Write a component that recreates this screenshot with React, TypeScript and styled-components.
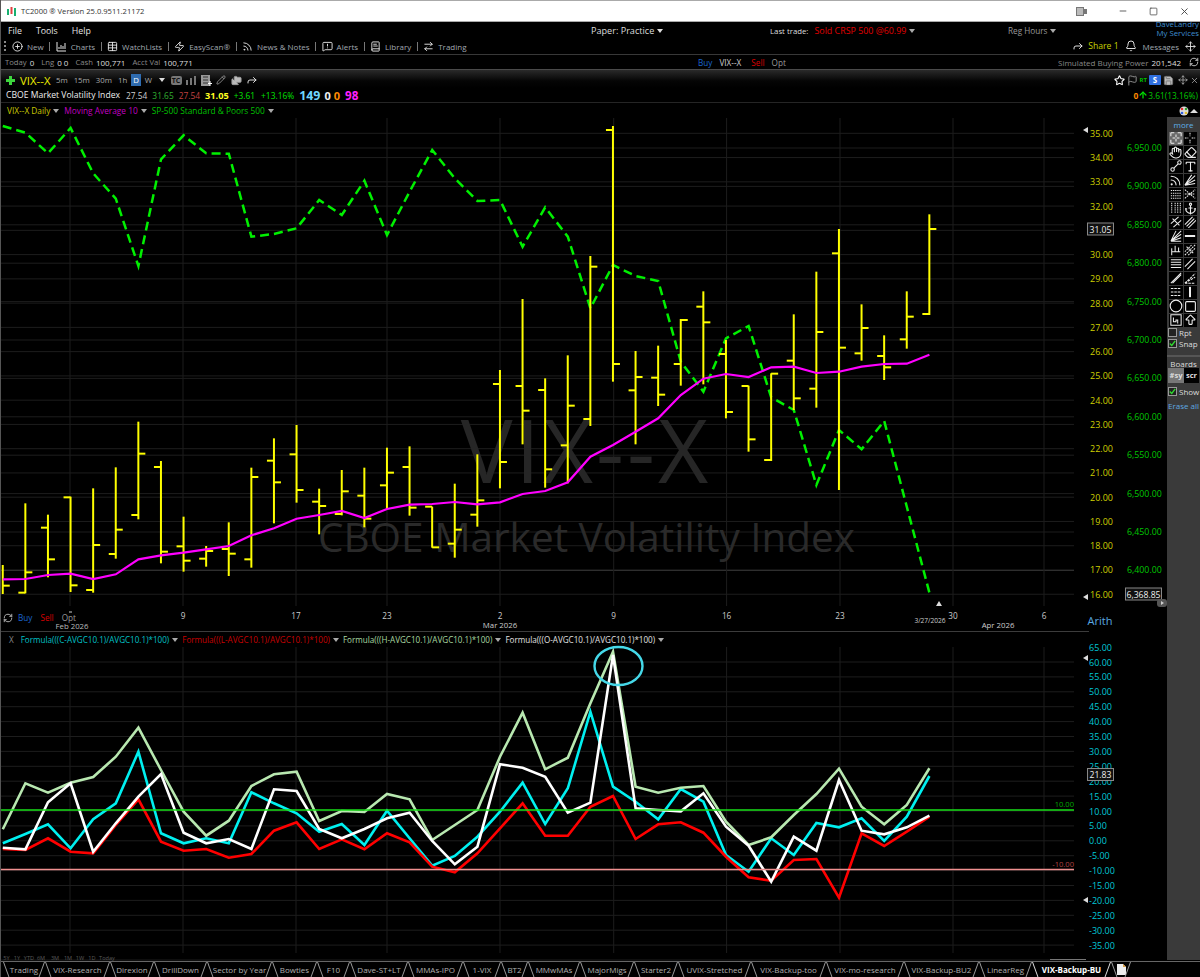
import React from "react";
import styled, { createGlobalStyle } from "styled-components";
import { CirclePlus, Table, Rss, MessageSquareWarning, BookText, ArrowRightLeft, Zap, Forward, Bell, Move, Star, Flag, Save, RefreshCw, Pencil, Folders, Minus, Square, X, Hand, Eraser, Type, Anchor, Circle, ArrowBigUp, ArrowUp } from "lucide-react";

const FONT = '"Open Sans", "Noto Sans", sans-serif';

const GlobalStyle = createGlobalStyle`
  html, body { margin: 0; padding: 0; background: #000; }
  #root { width: 1200px; height: 977px; overflow: hidden; }
  * { box-sizing: border-box; }
`;

const Page = styled.div`
  width: 1200px; height: 977px; display: flex; flex-direction: column; background: #000;
  font-family: ${FONT}; font-size: 9px; color: #ddd; overflow: hidden; border-left: 1px solid #555;
  white-space: nowrap;
`;
const TitleBar = styled.header`
  height: 22px; margin-left: -1px; background: #fff; border-top: 1px solid #aaa; border-bottom: 1px solid #aaa;
  display: flex; align-items: center; padding-left: 6px; color: #333; font-size: 7.6px;
`;
const TitleText = styled.span`margin-left: 4px;`;
const WindowButtons = styled.div`
  margin-left: auto; display: flex; align-items: center; color: #444;
`;
const WinBtn = styled.span<{ $w: number }>`
  width: ${p => p.$w}px; display: flex; justify-content: center;
`;
const MenuRow = styled.nav`
  height: 18px; padding-bottom: 1px; display: grid; grid-template-columns: 590px 179px 238px 148px 44px; align-items: center; color: #e4e4e4;
`;
const MenuLeft = styled.div`display: flex; gap: 14px; padding-left: 7px; font-size: 8.8px;`;
const Caret = styled.i<{ $c?: string }>`
  display: inline-block; width: 0; height: 0; margin-left: 3px; vertical-align: 1px;
  border-left: 3px solid transparent; border-right: 3px solid transparent; border-top: 4px solid ${p => p.$c || "#aaa"};
`;
const PaperLabel = styled.span`font-size: 9.1px; color: #ddd;`;
const LastTrade = styled.span`font-size: 7.8px; color: #ddd;`;
const Red = styled.span`color: #e00000; font-size: 8.9px; margin-left: 6px;`;
const RegHours = styled.span`font-size: 8.2px; color: #999;`;
const UserBlock = styled.div`
  display: flex; flex-direction: column; align-items: flex-end; color: #3f8fd0; font-size: 7.8px; line-height: 9px; margin-top: -4px; padding-right: 1px;
`;
const Toolbar = styled.div`
  height: 15px; padding-bottom: 2px; display: flex; align-items: center; padding-left: 3px; border-bottom: 1px solid #383838; color: #a0a8b0; font-size: 8px;
`;
const Grip = styled.span`
  width: 2px; height: 11px; margin-right: 6px;
  background: repeating-linear-gradient(#888 0 2px, transparent 2px 4px);
`;
const ToolItem = styled.span`display: inline-flex; align-items: center; gap: 4px; svg { color: #e8e8e8; flex: none; }`;
const Divider = styled.span`width: 1px; height: 9px; background: #777; margin: 0 5.5px;`;
const ToolRight = styled.div`margin-left: auto; display: flex; align-items: center; gap: 6px; padding-right: 4px; svg { color: #ddd; }`;
const ShareText = styled.span`color: #c8d400; margin-left: -2px; font-size: 8.6px;`;
const StatsRow = styled.div`
  height: 15px; display: grid; grid-template-columns: 697px 360px 1fr; align-items: center; border-bottom: 1px solid #4a4a4a; font-size: 7.7px; color: #888;
`;
const StatGroup = styled.div`display: flex; align-items: center; gap: 3px; padding-left: 4px;`;
const StatValue = styled.b`font-weight: 400; font-size: 8px; color: #ddd; margin-right: 4px;`;
const TradeGroup = styled.div`display: flex; gap: 7px; font-size: 8.2px;`;
const Buy = styled.span`color: #1a66d0;`;
const Sell = styled.span`color: #d80000;`;
const Opt = styled.span`color: #999;`;
const SymbolPlain = styled.span`color: #ccc; margin-right: 3px;`;
const PowerGroup = styled.div`display: flex; align-items: center; gap: 3px; font-size: 8px; svg { color: #ddd; margin-left: 1px; }`;
const SymbolHeader = styled.section`
  height: 33px; display: flex; flex-direction: column; border-bottom: 1px solid #252525;
  background: linear-gradient(#2a2a2a 0, #050505 11px, #000 18px);
`;
const SymbolTop = styled.div`height: 18px; display: flex; align-items: center; padding-left: 5px; color: #aaa; font-size: 7.8px; padding-top: 2px;`;
const PlusIcon = styled.span`
  width: 9px; height: 9px; margin-right: 5px;
  background: linear-gradient(#3dd63d,#3dd63d) center/3px 9px no-repeat, linear-gradient(#3dd63d,#3dd63d) center/9px 3px no-repeat;
`;
const SymbolName = styled.span`color: #ecec00; font-size: 11.4px; margin-right: 3px;`;
const Period = styled.span<{ $on?: boolean }>`
  display: inline-flex; justify-content: center; padding: 0 2.5px; margin-right: 1px; height: 12px; line-height: 12px;
  background: ${p => (p.$on ? "#2f6cb0" : "transparent")}; color: ${p => (p.$on ? "#fff" : "#aaa")};
`;
const IconRow = styled.span`display: inline-flex; align-items: center; gap: 4.5px; margin-left: 6px; svg { color: #999; flex: none; }`;
const TcChip = styled.span`
  background: #777; color: #111; font-size: 7px; font-weight: 700; width: 11px; height: 9px; line-height: 9px; text-align: center; border-radius: 2px; 
`;
const RightIcons = styled.span`margin-left: auto; display: flex; align-items: center; gap: 2px; padding-right: 1px; color: #aaa; svg { flex: none; }`;
const RtTag = styled.span`color: #00c000; font-size: 6px; font-weight: 700;`;
const SChip = styled.span`background: #2f6fe0; color: #fff; font-size: 8px; font-weight: 700; width: 12px; height: 10px; line-height: 10px; text-align: center; border-radius: 1px;`;
const SaveWrap = styled.span`display: flex; margin-right: 2px;`;
const SymbolBottom = styled.div`height: 14px; display: flex; align-items: center; padding-left: 5px; font-size: 8.6px; color: #eee;`;
const Quote = styled.span<{ $c: string; $s?: number; $b?: boolean; $ml?: number }>`
  color: ${p => p.$c}; font-size: ${p => p.$s || 8.4}px; font-weight: ${p => (p.$b ? 700 : 400)}; margin-left: ${p => p.$ml ?? 5}px;
`;
const QuoteRight = styled.span`margin-left: auto; display: flex; align-items: center; padding-right: 2px; font-size: 8.4px; color: #00c800;`;
const LegendRow = styled.div`height: 15px; display: flex; align-items: center; padding-left: 6px; font-size: 8.3px;`;
const LegendItem = styled.span<{ $c: string }>`color: ${p => p.$c}; margin-right: 5px;`;
const LegendTools = styled.span`margin-left: auto; display: flex; align-items: center; gap: 1px; padding-right: 2px;`;
const UpCaret = styled.i`
  width: 0; height: 0; border-left: 4px solid transparent; border-right: 4px solid transparent; border-bottom: 4px solid #ddd;
`;
const Workspace = styled.main`height: 843px; display: flex;`;
const ChartColumn = styled.div`width: 1166px; display: flex; flex-direction: column;`;
const ChartPane = styled.div`position: relative; height: 513px;`;
const ChartSvg = styled.svg`display: block; font-family: ${FONT}; overflow: visible;`;
const TradeOverlay = styled.div`
  position: absolute; left: 2px; top: 494px; display: flex; align-items: center; gap: 8px; font-size: 8.2px;
  svg { color: #ccc; margin-right: -3px; }
`;
const OscLegend = styled.div`
  height: 16px; border-top: 1px solid #3c3c3c; display: flex; align-items: center; padding-left: 8px; font-size: 8.1px; margin-right: 78px;
`;
const OscClose = styled.span`color: #888; margin-right: 7px;`;
const OscItem = styled.span<{ $c: string }>`color: ${p => p.$c}; margin-right: 4px;`;
const ToolStrip = styled.aside`
  width: 33px; height: 843px; margin-top: -1px; background: #3a3a3a; display: flex; flex-direction: column; align-items: center; color: #ddd; font-size: 8px;
`;
const More = styled.span`color: #5fb0e8; font-size: 8px; height: 14px; line-height: 15px;`;
const ToolGrid = styled.div`display: grid; grid-template-columns: 15px 14px; grid-auto-rows: 14px; margin-left: -2px;`;
const ToolCell = styled.span<{ $on?: boolean }>`
  display: flex; align-items: center; justify-content: center; margin: .5px; background: ${p => (p.$on ? "#6a6a6a" : "#000")}; color: #eee;
`;
const CheckRow = styled.label`display: flex; align-items: center; gap: 2px; width: 100%; padding-left: 1px; height: 11px; font-size: 8px; color: #ddd;`;
const CheckBox = styled.span<{ $on?: boolean }>`
  width: 9px; height: 9px; border: 1px solid #999; background: #222; display: flex; align-items: center; justify-content: center; color: #30e030; flex: none;
`;
const StripRule = styled.div`width: 100%; height: 2px; background: #555; margin: 6px 0 1px;`;
const Boards = styled.span`color: #ddd; font-size: 8px; height: 11px; line-height: 11px;`;
const BoardButtons = styled.div`display: grid; grid-template-columns: 16px 15px; height: 15px; width: 31px; font-size: 7.6px; font-weight: 700; text-align: center; line-height: 15px; margin-bottom: 3px; margin-top: -1px;`;
const BoardOn = styled.span`background: #777; color: #ddd;`;
const BoardOff = styled.span`background: #000; color: #ddd;`;
const EraseAll = styled.span`color: #5fa8e0; font-size: 8px; margin-top: 3px;`;
const TabBar = styled.footer`
  height: 16px; margin-left: -1px; display: flex; padding-left: 3px; border-top: 1px solid #666; background: #000;
`;
const Tab = styled.span<{ $w: number; $on?: boolean }>`
  position: relative; width: ${p => p.$w}px; flex: none; height: 15px; display: flex; align-items: center; justify-content: center;
  color: ${p => (p.$on ? "#fff" : "#b0b0b0")}; font-weight: ${p => (p.$on ? 700 : 400)}; font-size: 8px;
  &::before, &::after { content: ""; position: absolute; top: 0; bottom: 0; width: 1px; background: ${p => (p.$on ? "#ddd" : "#999")}; }
  &::before { left: 0; transform-origin: top left; transform: skewX(20deg); }
  &::after { right: 0; transform-origin: top right; transform: skewX(-20deg); }
`;

const xAt = (i: number) => 2.75 + 22.6 * i;
const pts = (a: number[], off: number) => a.map((z, i) => `${xAt(i).toFixed(1)},${(off + z / 3).toFixed(1)}`).join(" ");

const bars: [number, number, number, number][] = [
  [1335,1440,1440,1397],[1150,1420,1418,1357],[1184,1372,1223,1318],[1130,1416,1132,1396],[1105,1418,1410,1275],[1042,1316,1302,1229],
  [905,1198,1185,1001],[1023,1330,1041,1295],[1190,1355,1279,1322],[1278,1340,1316,1293],[1207,1368,1287,1301],[1043,1343,1318,1071],
  [955,1210,1022,1087],[915,1148,1003,1110],[1106,1243,1145,1158],[1050,1186,1182,1114],[1043,1222,1127,1196],[983,1167,1096,1058],
  [979,1187,1041,1163],[1160,1283,1160,1282],[1091,1313,1271,1229],[1003,1220,1184,1141],[750,1105,792,1026],[537,973,798,872],
  [775,1103,810,1048],[706,1090,976,857],[408,918,897,440],[18,785,30,732],[693,973,811,771],[677,858,773,824],[597,797,732,600],
  [514,793,560,607],[660,895,702,876],[797,995,798,958],[760,1023,1020,761],[583,870,722,835],[455,863,806,636],[327,1110,400,683],
  [553,722,700,624],[646,780,708,742],[514,686,658,590],[283,585,582,327],
];
const ma = [1378,1377,1365,1361,1377,1363,1318,1306,1298,1288,1278,1246,1225,1196,1185,1173,1194,1167,1154,1152,1146,1153,1147,1122,1113,1087,1010,975,935,895,825,776,762,771,742,740,759,755,740,732,731,704];
const sp = [18,38,100,24,160,236,438,118,46,100,101,350,342,325,240,285,182,345,215,90,175,243,240,380,262,350,565,435,468,483,725,815,655,618,832,870,1095,930,988,903,1160,1418];
const oscH = [568,430,458,428,411,350,263,390,515,587,542,438,403,395,543,513,516,462,478,600,555,510,350,218,388,353,190,35,440,458,443,438,545,615,592,525,462,386,500,553,495,385];
const oscC = [610,582,553,625,538,490,335,580,610,595,610,457,490,520,575,552,615,512,595,677,648,590,515,428,552,445,215,440,485,538,447,485,645,695,595,645,549,562,535,603,530,408];
const oscL = [627,630,595,635,640,555,478,605,632,627,653,642,572,547,627,598,628,580,607,680,697,640,565,490,587,587,500,468,597,553,547,578,650,712,722,660,657,773,580,618,575,530];
const oscO = [623,628,487,430,635,550,470,402,578,610,597,627,448,453,567,595,567,535,518,603,673,620,373,383,410,518,488,45,505,510,514,460,560,617,725,590,632,420,572,583,562,527];

const vGrid = [70, 183, 296, 387, 500, 613.7, 726.6, 840, 953, 1044];
const priceY = (p: number) => 133.3 + (35 - p) * 24.26;
const spY = (i: number) => 148 + i * 38.4;
const oscY = (v: number) => 840.8 - v * 2.98;
const GRID = "#1d1d1d";
const YEL = "#cfcf00";
const GRN = "#00c800";
const CY = "#00c8d8";

const Tri = ({ x, y }: { x: number; y: number }) => <polygon points={`${x},${y} ${x + 5},${y - 3} ${x + 5},${y + 3}`} fill="#ddd" />;

const ValueBox = ({ x, y, w, t }: { x: number; y: number; w: number; t: string }) => (
  <g>
    <rect x={x} y={y - 6} width={w} height={12} fill="#111" stroke="#888" />
    <text x={x + w / 2} y={y + 0.5} fill="#eee" fontSize="8.6" textAnchor="middle" dominantBaseline="central">{t}</text>
  </g>
);

const PriceChart = () => (
  <ChartSvg width={1166} height={513} viewBox="1 118 1166 513">
    {Array.from({ length: 20 }, (_, i) => <line key={i} x1={1} x2={1074} y1={priceY(35 - i)} y2={priceY(35 - i)} stroke={GRID} />)}
    {Array.from({ length: 12 }, (_, i) => <line key={i} x1={1} x2={1074} y1={spY(i)} y2={spY(i)} stroke={i === 11 ? "#333" : GRID} />)}
    {vGrid.map(x => <line key={x} x1={x} x2={x} y1={118} y2={606} stroke={GRID} />)}
    <text x={586} y={483} fill="#262626" fontSize="87" letterSpacing="3" textAnchor="middle">VIX--X</text>
    <text x={586.500} y={552} fill="#2a2a2a" fontSize="40.500" textAnchor="middle">CBOE Market Volatility Index</text>
    <polyline points={pts(sp, 120)} fill="none" stroke="#00f000" strokeWidth="2.5" strokeDasharray="9 5" />
    {bars.map(([t, b, o, c], i) => {
      const x = xAt(i);
      return (
        <g key={i} stroke="#ffff00" strokeWidth="2">
          <line x1={x} x2={x} y1={120 + t / 3} y2={Math.min(120 + b / 3, 594)} />
          {o < 1430 && <line x1={x - 7} x2={x} y1={120 + o / 3} y2={120 + o / 3} />}
          <line x1={x} x2={x + 7} y1={120 + c / 3} y2={120 + c / 3} />
        </g>
      );
    })}
    <polyline points={pts(ma, 120)} fill="none" stroke="#ff00ff" strokeWidth="2.2" />
    {Array.from({ length: 20 }, (_, i) => 35 - i).filter(v => v !== 31).map(v => <text key={v} x={1090} y={priceY(v)} fill={YEL} fontSize="9" dominantBaseline="central">{v.toFixed(2)}</text>)}
    {Array.from({ length: 12 }, (_, i) => <text key={i} x={1127} y={spY(i)} fill={GRN} fontSize="8.800" dominantBaseline="central">{(6950 - i * 50).toLocaleString("en-US")}.00</text>)}
    <Tri x={1083} y={130} />
    <Tri x={1083} y={597} />
    <ValueBox x={1087.5} y={229} w={26} t="31.05" />
    <ValueBox x={1125.5} y={594} w={36} t="6,368.85" />
    <rect x={1157} y={599} width={10} height={8} rx={3} fill="#555" />
    <polygon points="1161,601 1164,603 1161,605" fill="#ccc" />
    <polygon points="936,606 942,606 939,601" fill="#ddd" />
    <line x1={69} x2={72} y1={612} y2={612} stroke="#ccc" />
    {[["9", 183], ["17", 296], ["23", 387], ["2", 500], ["9", 613.7], ["16", 726.6], ["23", 840], ["30", 953], ["6", 1044]].map(([t, x]) => (
      <text key={`${t}${x}`} x={x} y={615} fill="#ccc" fontSize="8.2" textAnchor="middle" dominantBaseline="central">{t}</text>
    ))}
    <text x={72} y={626} fill="#bbb" fontSize="7.800" textAnchor="middle" dominantBaseline="central">Feb 2026</text>
    <text x={500} y={625} fill="#ccc" fontSize="7.800" textAnchor="middle" dominantBaseline="central">Mar 2026</text>
    <text x={998} y={625} fill="#ccc" fontSize="7.800" textAnchor="middle" dominantBaseline="central">Apr 2026</text>
    <text x={930} y={620} fill="#ccc" fontSize="6.6" textAnchor="middle" dominantBaseline="central">3/27/2026</text>
    <text x={1100} y={620} fill="#5aa8e0" fontSize="11" textAnchor="middle" dominantBaseline="central">Arith</text>
  </ChartSvg>
);

const OscChart = () => (
  <ChartSvg width={1166} height={314} viewBox="1 647 1166 314">
    {Array.from({ length: 21 }, (_, i) => <line key={i} x1={1} x2={1074} y1={oscY(60 - i * 5)} y2={oscY(60 - i * 5)} stroke={GRID} />)}
    {vGrid.map(x => <line key={x} x1={x} x2={x} y1={647} y2={953} stroke={GRID} />)}
    <polyline points={pts(oscC, 640)} fill="none" stroke="#00f0f0" strokeWidth="2.6" />
    <polyline points={pts(oscL, 640)} fill="none" stroke="#ff0000" strokeWidth="2.6" />
    <polyline points={pts(oscH, 640)} fill="none" stroke="#b8e8b0" strokeWidth="2.6" />
    <polyline points={pts(oscO, 640)} fill="none" stroke="#ffffff" strokeWidth="2.6" />
    <line x1={1} x2={1074} y1={810} y2={810} stroke="#18e018" strokeWidth="1.4" />
    <line x1={1} x2={1074} y1={869.5} y2={869.5} stroke="#f09090" strokeWidth="1.4" />
    <text x={1074} y={804} fill="#00a800" fontSize="7.6" textAnchor="end" dominantBaseline="central">10.00</text>
    <text x={1074} y={864} fill="#b04040" fontSize="7.6" textAnchor="end" dominantBaseline="central">-10.00</text>
    <ellipse cx={618.5} cy={666} rx={24} ry={19} fill="none" stroke="#45d8e8" strokeWidth="2.4" />
    {Array.from({ length: 21 }, (_, i) => (
      <text key={i} x={1089} y={oscY(65 - i * 5)} fill={CY} fontSize="9" dominantBaseline="central">{(65 - i * 5).toFixed(2)}</text>
    ))}
    <ValueBox x={1087.5} y={774.5} w={26} t="21.83" />
    <Tri x={1083} y={658} />
    <Tri x={1083} y={900} />
    {[["5Y", 6.5], ["1Y", 17], ["YTD", 29], ["6M", 41], ["3M", 55], ["1M", 68], ["1W", 80], ["1D", 92], ["Today", 107]].map(([t, x]) => (
      <text key={t} x={x} y={958} fill="#5a5a5a" fontSize="5.6" textAnchor="middle" dominantBaseline="central">{t}</text>
    ))}
    <line x1={1050} x2={1086} y1={959.5} y2={959.5} stroke="#777" />
  </ChartSvg>
);

const S = ({ children }: { children: React.ReactNode }) => (
  <svg width="12" height="12" viewBox="0 0 14 14" fill="none" stroke="currentColor" strokeWidth="1.2">{children}</svg>
);
const tools: React.ReactNode[] = [
  <S><path d="M1 1h4M9 1h4M1 13h4M9 13h4M1 1v4M13 1v4M1 9v4M13 9v4M7 3v3M7 8v3M3 7h3M8 7h3" /></S>,
  <S><path d="M7 1v4M7 9v4M1 7h4M9 7h4" strokeDasharray="2 1" /></S>,
  <Hand size={13} />, <Eraser size={13} />,
  <S><circle cx="3" cy="11" r="2" /><circle cx="11" cy="3" r="2" /><path d="M4.5 9.5l5-5" /></S>,
  <Type size={13} />,
  <Rss size={13} />,
  <S><path d="M1 13L13 2M1 13l12-6M1 13l12-2M1 13L9 1" /></S>,
  <S><path d="M1 3h12M1 6h12M1 9h12M1 12h12" strokeDasharray="1.5 1" /></S>,
  <S><path d="M1 2l12 10M1 12L13 2M1 7h12" strokeDasharray="2 1" /></S>,
  <S><path d="M2 1v12M6 1v12M9 1v12M12 1v12" strokeDasharray="1.5 1" /></S>,
  <Anchor size={13} />,
  <S><path d="M1 9L10 1M4 13L13 5M3 3l8 8" /></S>,
  <S><path d="M1 10L10 1M3 12L12 3M5 14L14 5" /></S>,
  <S><path d="M1 13L13 1M1 13L13 5M1 13L13 9M1 13L7 1M1 13h12" /></S>,
  <S><path d="M1 7h12" strokeWidth="2.4" /></S>,
  <S><path d="M2 13V5M2 9h10M6 9V2M10 9V4" /></S>,
  <S><path d="M1 13L13 1M1 9L9 1M5 13L13 5M3 3l8 8" strokeDasharray="2 1" /></S>,
  <S><path d="M1 2h12M1 5h12M1 8h12M1 11h12" /></S>,
  <S><path d="M1 10L10 1M4 13L13 4" /></S>,
  <S><path d="M1 13L13 1M3 13L13 3" /></S>,
  <S><path d="M1 13L13 2M1 13L13 6M1 13h12" strokeDasharray="3 1" /></S>,
  <S><path d="M1 3h12M1 7h12M1 11h12" strokeDasharray="3 1" /></S>,
  <S><path d="M7 1v12" strokeWidth="2.4" /></S>,
  <Circle size={14} />,
  <Square size={13} />,
  <S><path d="M1 1h12v12H1zM4 4v5h3V7h2v4" /></S>,
  <ArrowBigUp size={14} />,
];

const Check = () => (
  <svg width="9" height="9" viewBox="0 0 9 9" fill="none" stroke="currentColor" strokeWidth="1.6"><path d="M1 4.5L3.5 7 8 1" /></svg>
);

const tabs: [string, number][] = [
  ["Trading", 42], ["VIX-Research", 65], ["Direxion", 44], ["DrillDown", 53], ["Sector by Year", 65], ["Bowties", 45], ["F10", 33], ["Dave-ST+LT", 58],
  ["MMAs-IPO", 55], ["1-VIX", 38], ["BT2", 27], ["MMwMAs", 52], ["MajorMigs", 54], ["Starter2", 44], ["UVIX-Stretched", 73], ["VIX-Backup-too", 75],
  ["VIX-mo-research", 78], ["VIX-Backup-BU2", 75], ["LinearReg", 53], ["VIX-Backup-BU", 79],
];

export default function App() {
  return (
    <Page>
      <GlobalStyle />
      <TitleBar>
        <svg width="11" height="11" viewBox="0 0 11 11">
          <path d="M1 3h2v6H1z" fill="#18b070" /><path d="M4.5 1h2v7h-2z" fill="#e04040" /><path d="M8 2h2v8H8z" fill="#18b070" />
        </svg>
        <TitleText>TC2000 ® Version 25.0.9511.21172</TitleText>
        <WindowButtons>
          <WinBtn $w={50}>
            <svg width="12" height="9" viewBox="0 0 12 9"><rect x=".5" y=".5" width="7" height="8" fill="#bbb" stroke="#777" /><rect x="7" y="2" width="4" height="5" fill="#777" /></svg>
          </WinBtn>
          <WinBtn $w={31}><Minus size={10} /></WinBtn>
          <WinBtn $w={31}><Square size={9} /></WinBtn>
          <WinBtn $w={31}><X size={11} /></WinBtn>
        </WindowButtons>
      </TitleBar>
      <MenuRow>
        <MenuLeft><span>File</span><span>Tools</span><span>Help</span></MenuLeft>
        <PaperLabel>Paper: Practice<Caret $c="#ddd" /></PaperLabel>
        <LastTrade>Last trade:<Red>Sold CRSP 500 @60.99</Red><Caret /></LastTrade>
        <RegHours>Reg Hours<Caret /></RegHours>
        <UserBlock><span>DaveLandry</span><span>My Services</span></UserBlock>
      </MenuRow>
      <Toolbar>
        <Grip />
        <ToolItem><CirclePlus size={11} />New</ToolItem><Divider />
        <ToolItem><svg width="11" height="11" viewBox="0 0 11 11" fill="none" stroke="currentColor"><path d="M1 1v9h9M3 8V6M5 8V4M7 8V5M9 8V2" /></svg>Charts</ToolItem><Divider />
        <ToolItem><Table size={11} />WatchLists</ToolItem><Divider />
        <ToolItem><Zap size={11} />EasyScan®</ToolItem><Divider />
        <ToolItem><Rss size={11} />News &amp; Notes</ToolItem><Divider />
        <ToolItem><MessageSquareWarning size={11} />Alerts</ToolItem><Divider />
        <ToolItem><BookText size={11} />Library</ToolItem><Divider />
        <ToolItem><ArrowRightLeft size={11} />Trading</ToolItem>
        <ToolRight>
          <Forward size={12} />
          <ShareText>Share 1</ShareText>
          <Bell size={12} />
          <span>Messages</span>
          <Move size={11} />
        </ToolRight>
      </Toolbar>
      <StatsRow>
        <StatGroup>
          <span>Today</span><StatValue>0</StatValue><span>Lng</span><StatValue>0 0</StatValue><span>Cash</span><StatValue>100,771</StatValue><span>Acct Val</span><StatValue>100,771</StatValue>
        </StatGroup>
        <TradeGroup><Buy>Buy</Buy><SymbolPlain>VIX--X</SymbolPlain><Sell>Sell</Sell><Opt>Opt</Opt></TradeGroup>
        <PowerGroup><span>Simulated Buying Power</span><StatValue>201,542</StatValue><RefreshCw size={10} /></PowerGroup>
      </StatsRow>
      <SymbolHeader>
        <SymbolTop>
          <PlusIcon />
          <SymbolName>VIX--X</SymbolName>
          <Period>5m</Period><Period>15m</Period><Period>30m</Period><Period>1h</Period><Period $on>D</Period><Period>W</Period>
          <Caret $c="#ddd" />
          <IconRow>
            <TcChip>TC</TcChip>
            <svg width="10" height="9" viewBox="0 0 10 9" fill="#777"><path d="M0 4h2v5H0zM4 2h2v7H4zM8 0h2v9H8z" /></svg>
            <svg width="11" height="11" viewBox="0 0 11 11" fill="#999"><path d="M0 0h9v11H0z" /><path d="M2 2h5M2 5h5M2 8h5" stroke="#333" strokeWidth="1" /><path d="M9 6v5M7 8.500h4" stroke="#fff" /></svg>
            <Pencil size={10} />
            <Folders size={11} fill="#bbb" />
            <Forward size={12} color="#ddd" />
          </IconRow>
          <RightIcons>
            <Star size={11} color="#fff" strokeWidth={2.4} />
            <Flag size={11} color="#999" />
            <RtTag>RT</RtTag>
            <SChip>S</SChip>
            <SaveWrap><Save size={11} fill="#bbb" color="#777" /></SaveWrap>
            <Move size={10} />
            <X size={9} />
          </RightIcons>
        </SymbolTop>
        <SymbolBottom>
          <span>CBOE Market Volatility Index</span>
          <Quote $c="#ccc" $ml={6}>27.54</Quote>
          <Quote $c="#30b030">31.65</Quote>
          <Quote $c="#c04040">27.54</Quote>
          <Quote $c="#ffff20" $b $s={9.2}>31.05</Quote>
          <Quote $c="#00e000">+3.61</Quote>
          <Quote $c="#00e000" $ml={6}>+13.16%</Quote>
          <Quote $c="#70d8ff" $s={12.4} $b>149</Quote>
          <Quote $c="#f0f0f0" $s={11} $b $ml={4}>0</Quote>
          <Quote $c="#ff8a00" $s={11} $b $ml={3}>0</Quote>
          <Quote $c="#ff20ff" $s={11.6} $b>98</Quote>
          <QuoteRight>
            <Quote $c="#ff8a00" $b $ml={0}>0</Quote>
            <ArrowUp size={10} strokeWidth={3} color="#00e000" />
            3.61(13.16%)
          </QuoteRight>
        </SymbolBottom>
      </SymbolHeader>
      <LegendRow>
        <LegendItem $c="#c8c800">VIX--X Daily<Caret /></LegendItem>
        <LegendItem $c="#c000c0">Moving Average 10<Caret /></LegendItem>
        <LegendItem $c="#00c000">SP-500 Standard &amp; Poors 500<Caret /></LegendItem>
        <LegendTools>
          <svg width="10" height="10" viewBox="0 0 10 10"><circle cx="5" cy="5" r="4.500" fill="#ddd" /><circle cx="3" cy="3" r="1.300" fill="#e03030" /><circle cx="7" cy="3" r="1.300" fill="#30a030" /><circle cx="3" cy="7" r="1.300" fill="#3060e0" /><circle cx="7" cy="7" r="1.300" fill="#e0c030" /></svg>
          <UpCaret />
        </LegendTools>
      </LegendRow>
      <Workspace>
        <ChartColumn>
          <ChartPane>
            <PriceChart />
            <TradeOverlay>
              <RefreshCw size={10} />
              <Buy>Buy</Buy><Sell>Sell</Sell><Opt>Opt</Opt>
            </TradeOverlay>
          </ChartPane>
          <OscLegend>
            <OscClose>X</OscClose>
            <OscItem $c="#00c0c8">Formula(((C-AVGC10.1)/AVGC10.1)*100)<Caret /></OscItem>
            <OscItem $c="#c80000">Formula(((L-AVGC10.1)/AVGC10.1)*100)<Caret /></OscItem>
            <OscItem $c="#a8d8a0">Formula(((H-AVGC10.1)/AVGC10.1)*100)<Caret /></OscItem>
            <OscItem $c="#e0e0e0">Formula(((O-AVGC10.1)/AVGC10.1)*100)<Caret /></OscItem>
          </OscLegend>
          <OscChart />
        </ChartColumn>
        <ToolStrip>
          <More>more</More>
          <ToolGrid>
            {tools.map((t, i) => <ToolCell key={i} $on={i === 0}>{t}</ToolCell>)}
          </ToolGrid>
          <CheckRow><CheckBox />Rpt</CheckRow>
          <CheckRow><CheckBox $on><Check /></CheckBox>Snap</CheckRow>
          <StripRule />
          <Boards>Boards</Boards>
          <BoardButtons><BoardOn>#sy</BoardOn><BoardOff>scr</BoardOff></BoardButtons>
          <CheckRow><CheckBox $on><Check /></CheckBox>Show</CheckRow>
          <EraseAll>Erase all</EraseAll>
        </ToolStrip>
      </Workspace>
      <TabBar>
        {tabs.map(([t, w]) => <Tab key={t} $w={w} $on={t === "VIX-Backup-BU"}>{t}</Tab>)}
        <Tab $w={20}>
          <svg width="9" height="11" viewBox="0 0 9 11"><path d="M0 0h6l3 3v8H0z" fill="#eee" /><path d="M6 0l3 3H6z" fill="#e0a040" /></svg>
        </Tab>
      </TabBar>
    </Page>
  );
}
